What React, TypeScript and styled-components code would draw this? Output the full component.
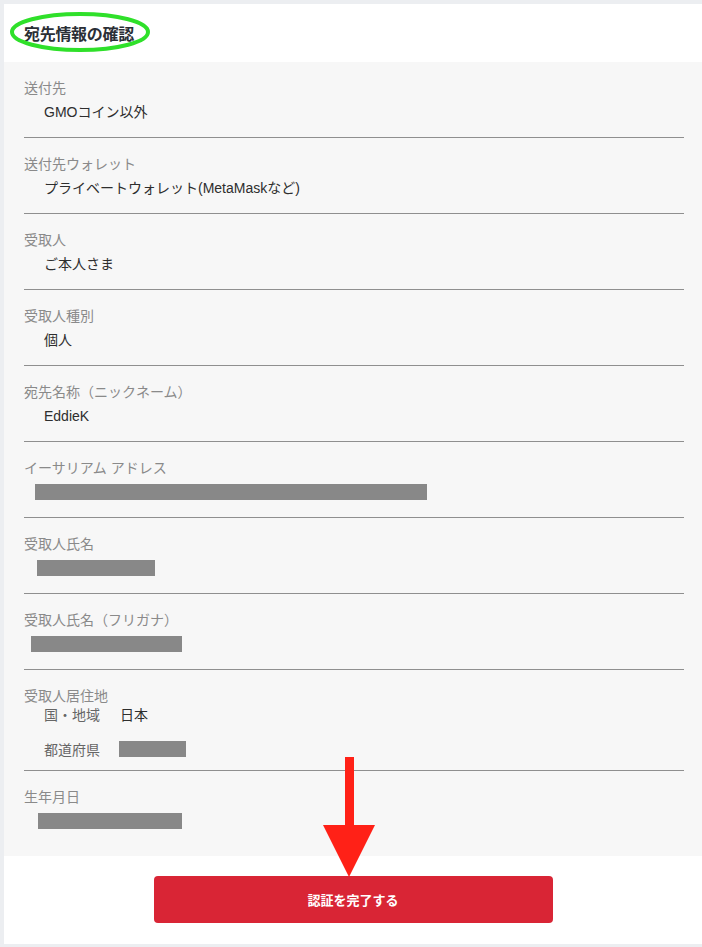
import React from 'react';
import styled, { createGlobalStyle } from 'styled-components';

const GlobalStyle = createGlobalStyle`
  html, body {
    margin: 0;
    padding: 0;
    background: #eceef1;
  }
  body {
    font-family: "Liberation Sans", "Noto Sans CJK JP", sans-serif;
  }
`;

const Page = styled.div`
  padding: 4px 0 3px 4px;
`;

const Card = styled.div`
  position: relative;
  background: #ffffff;
`;

const Header = styled.div`
  height: 58px;
  display: flex;
  align-items: center;
  padding-left: 20px;
`;

const Title = styled.h2`
  margin: 0;
  font-size: 16px;
  font-weight: 700;
  color: #2b2f36;
  letter-spacing: -0.3px;
`;

const Highlight = styled.svg`
  position: absolute;
  left: 5px;
  top: 7px;
  pointer-events: none;
`;

const List = styled.div`
  background: #f7f7f7;
  padding: 0 18px 10px 20px;
`;

const Item = styled.div`
  padding: 16px 0 15px;
  border-bottom: 1px solid #8f8f8f;

  &:last-child {
    border-bottom: none;
  }
`;

const Label = styled.div`
  font-size: 14px;
  line-height: 20px;
  color: #8a8a8a;
`;

const Value = styled.div`
  margin-top: 4px;
  padding-left: 20px;
  height: 20px;
  font-size: 14px;
  line-height: 20px;
  color: #2e2e2e;
  display: flex;
  align-items: center;
`;

const Redacted = styled.div<{ $offset: number; $width: number }>`
  margin-left: ${p => p.$offset - 20}px;
  width: ${p => p.$width}px;
  height: 16px;
  background: #888888;
`;

const SubRow = styled.div<{ $first?: boolean }>`
  margin-top: ${p => (p.$first ? -2 : 15)}px;
  padding-left: 20px;
  height: 20px;
  display: flex;
  align-items: center;
  font-size: 14px;
  color: #2e2e2e;
`;

const SubLabel = styled.span`
  width: 76px;
  color: #666666;
`;

const SubBar = styled.div`
  margin-left: -1px;
  width: 67px;
  height: 16px;
  background: #888888;
`;

const Residence = styled(Item)`
  padding-bottom: 11px;
`;

const Footer = styled.div`
  display: flex;
  justify-content: center;
  padding: 20px 0 21px;
`;

const SubmitButton = styled.button`
  width: 399px;
  height: 47px;
  border: none;
  border-radius: 4px;
  background: #d92535;
  color: #ffffff;
  font-family: inherit;
  font-size: 13px;
  font-weight: 700;
  cursor: pointer;
`;

const Arrow = styled.svg`
  position: absolute;
  left: 319px;
  top: 753px;
  pointer-events: none;
`;

type Row = { label: string; value?: string; bar?: [number, number] };

const rows: Row[] = [
  { label: '送付先', value: 'GMOコイン以外' },
  { label: '送付先ウォレット', value: 'プライベートウォレット(MetaMaskなど)' },
  { label: '受取人', value: 'ご本人さま' },
  { label: '受取人種別', value: '個人' },
  { label: '宛先名称（ニックネーム）', value: 'EddieK' },
  { label: 'イーサリアム アドレス', bar: [11, 392] },
  { label: '受取人氏名', bar: [13, 118] },
  { label: '受取人氏名（フリガナ）', bar: [7, 151] },
];

export default function App() {
  return (
    <>
      <GlobalStyle />
      <Page>
        <Card>
          <Header>
            <Title>宛先情報の確認</Title>
          </Header>
          <Highlight width="142" height="42" viewBox="0 0 142 42">
            <ellipse cx="71" cy="21" rx="68" ry="18" fill="none" stroke="#2fe02a" strokeWidth="4" />
          </Highlight>
          <List>
            {rows.map(r => (
              <Item key={r.label}>
                <Label>{r.label}</Label>
                <Value>
                  {r.bar ? <Redacted $offset={r.bar[0]} $width={r.bar[1]} /> : r.value}
                </Value>
              </Item>
            ))}
            <Residence>
              <Label>受取人居住地</Label>
              <SubRow $first>
                <SubLabel>国・地域</SubLabel>
                日本
              </SubRow>
              <SubRow>
                <SubLabel>都道府県</SubLabel>
                <SubBar />
              </SubRow>
            </Residence>
            <Item>
              <Label>生年月日</Label>
              <Value>
                <Redacted $offset={14} $width={144} />
              </Value>
            </Item>
          </List>
          <Footer>
            <SubmitButton>認証を完了する</SubmitButton>
          </Footer>
          <Arrow width="52" height="120" viewBox="0 0 52 120">
            <rect x="22" y="0" width="9" height="72" fill="#ff2117" />
            <polygon points="0,68 52,68 26,120" fill="#ff2117" />
          </Arrow>
        </Card>
      </Page>
    </>
  );
}
